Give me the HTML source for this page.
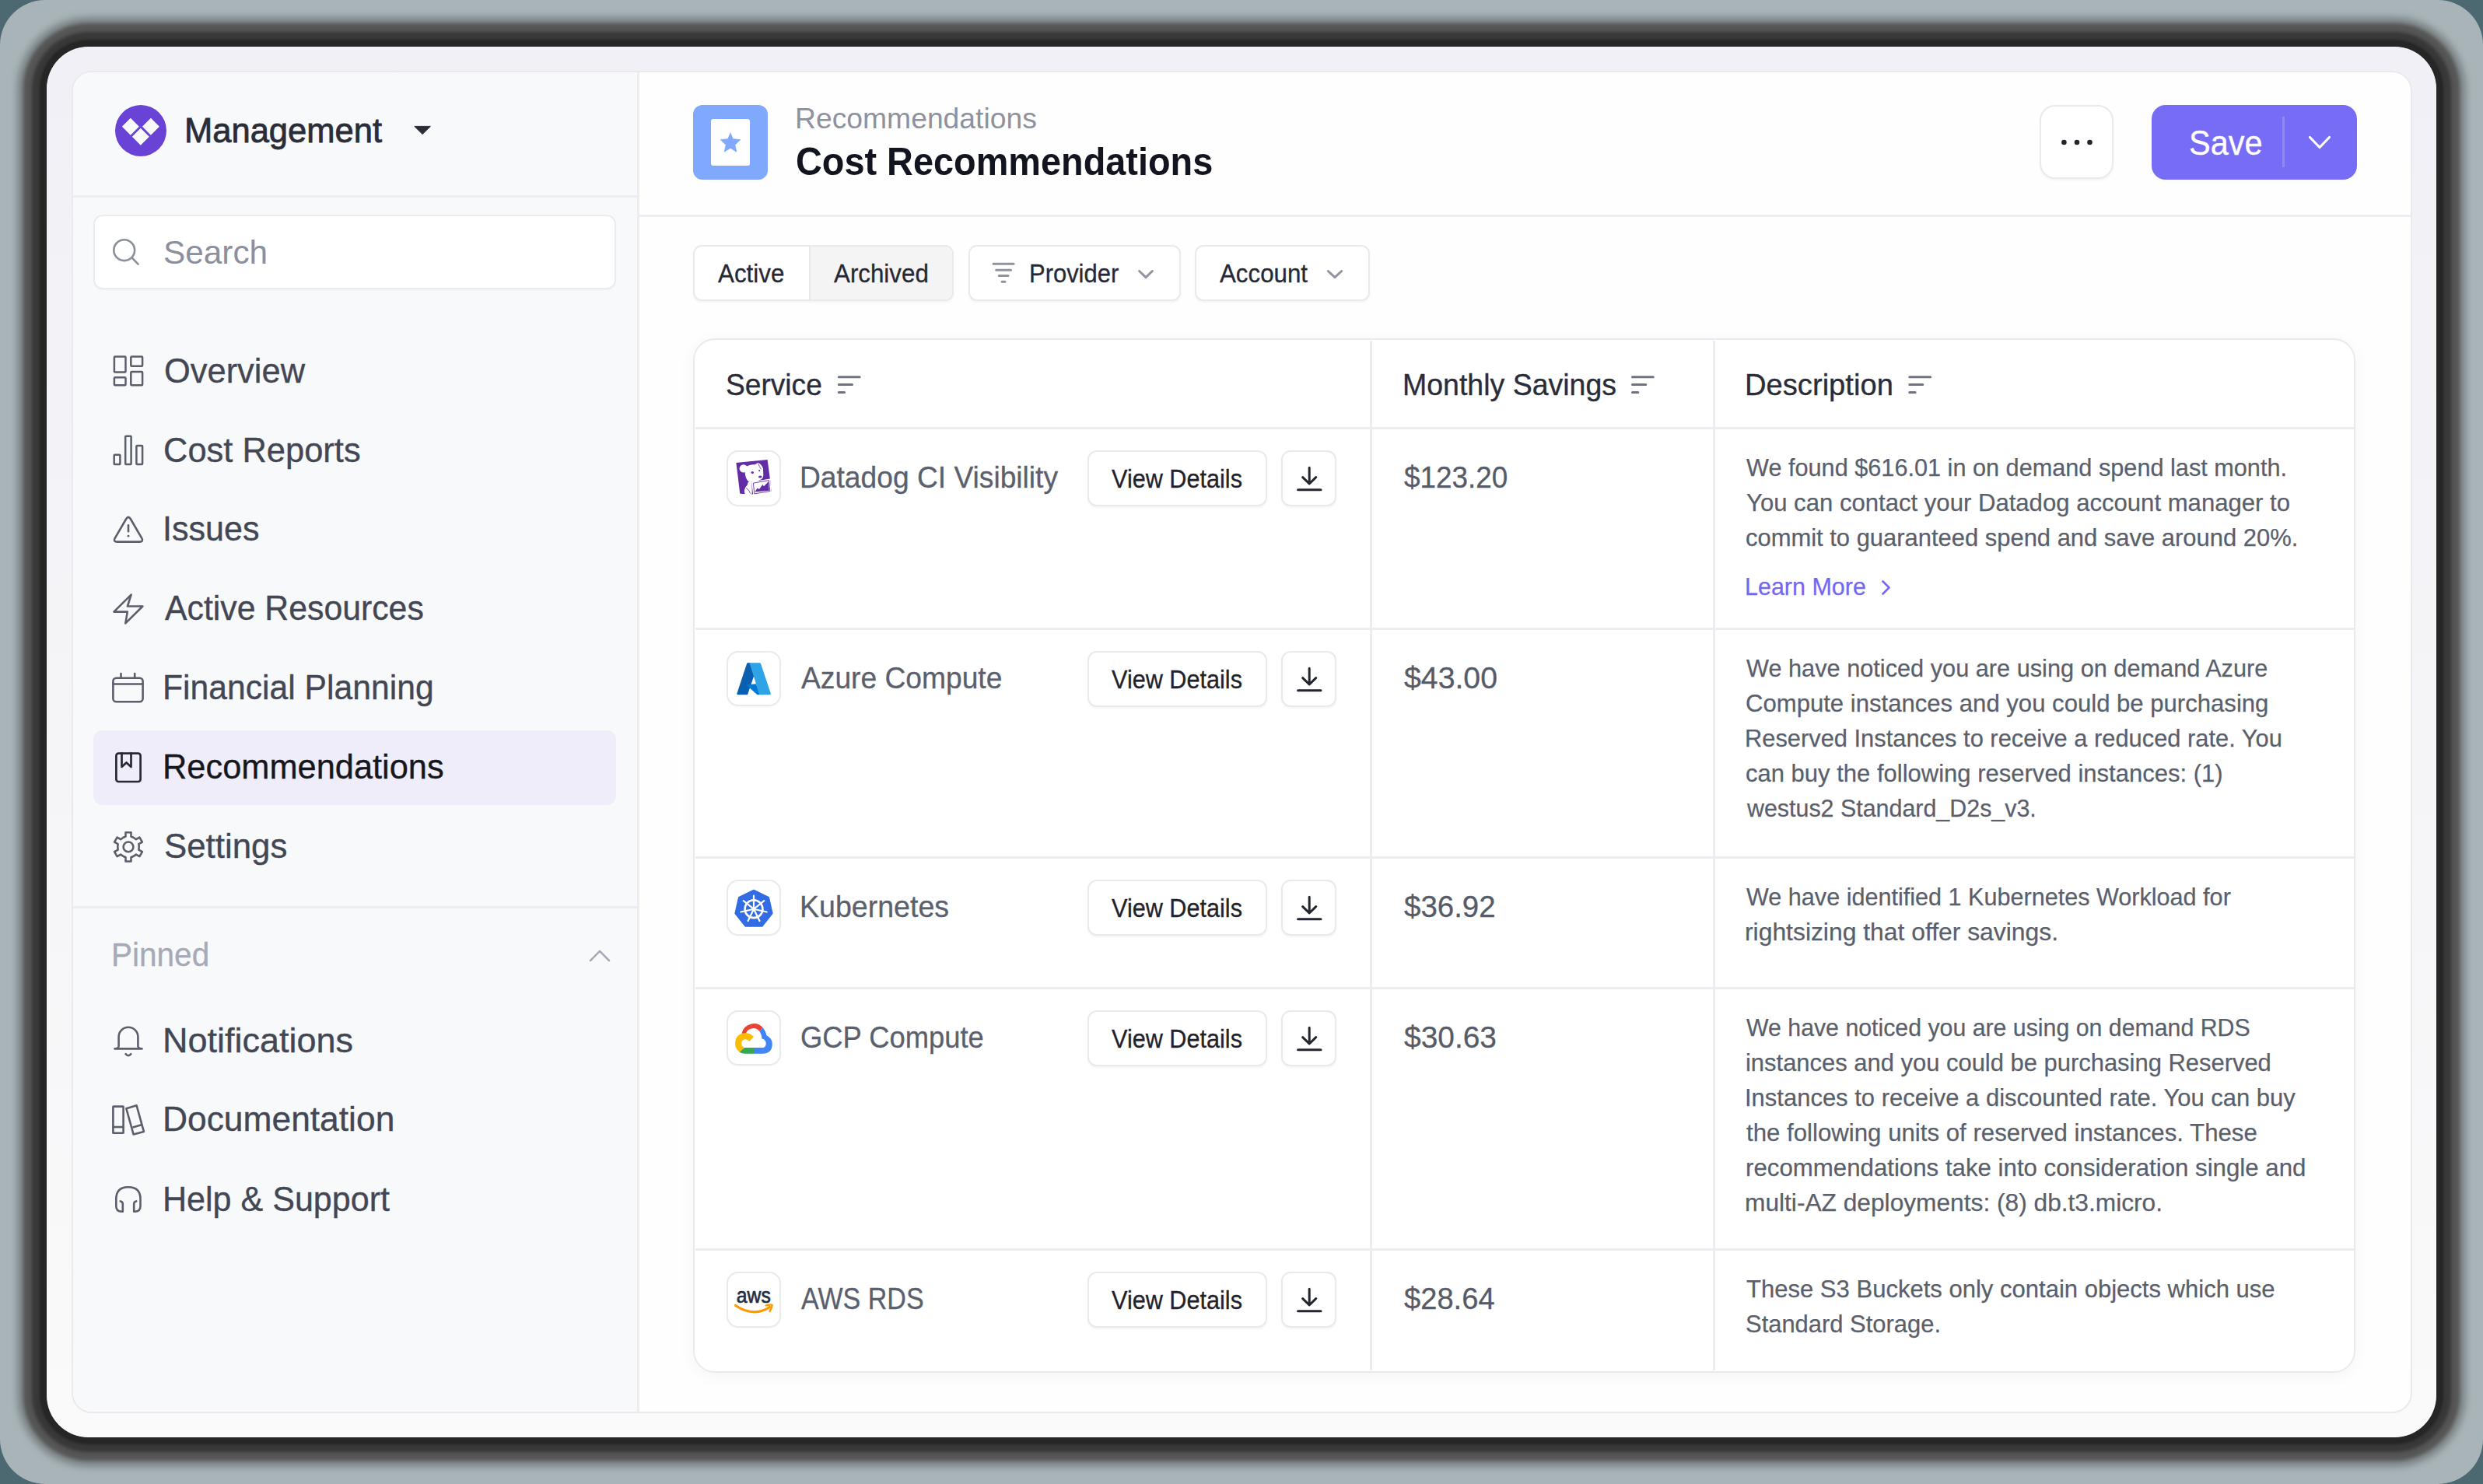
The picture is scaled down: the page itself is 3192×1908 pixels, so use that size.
<!DOCTYPE html>
<html><head><meta charset="utf-8">
<style>
html,body{margin:0;padding:0}
body{width:3192px;height:1908px;position:relative;overflow:hidden;background:#4c6870;font-family:"Liberation Sans",sans-serif}
.a{position:absolute;box-sizing:border-box}
.t{position:absolute;white-space:nowrap;line-height:1;transform-origin:0 0;font-family:"Liberation Sans",sans-serif}
svg{position:absolute;overflow:visible}
.btn{position:absolute;box-sizing:border-box;background:#fff;border:2px solid #e9eaed;box-shadow:0 2px 3px rgba(20,20,40,0.045)}
</style></head><body>
<!-- background noise average -->
<div class="a" style="left:0;top:0;width:3192px;height:1908px;border-radius:58px;background:#a8b4b8"></div>
<!-- window with shadow -->
<div class="a" style="left:60px;top:60px;width:3072px;height:1788px;border-radius:54px;background:linear-gradient(180deg,#f1f0f6 0%,#f5f5f8 50%,#fafafa 100%);box-shadow:0 0 3px 9px #262626,0 0 4px 19px #383838,0 0 4px 30px #565656,0 0 8px 38px rgba(110,116,118,0.75)"></div>
<!-- panel -->
<div class="a" style="left:91.5px;top:90.8px;width:3009px;height:1726.5px;border-radius:26px;border:2.7px solid #eaeaee;background:#fefefe;overflow:hidden">
  <div class="a" style="left:0;top:0;width:728px;height:1726px;background:#f8f9fb;border-right:3px solid #ecedf0"></div>
  <div class="a" style="left:0;top:158.3px;width:726px;height:3px;background:#ecedf0"></div>
  <div class="a" style="left:0;top:1072.6px;width:726px;height:3px;background:#ecedf0"></div>
  <div class="a" style="left:728px;top:183.3px;width:2280px;height:3px;background:#ecedf0"></div>
</div>

<!-- sidebar: logo -->
<svg style="left:148px;top:135px" width="66" height="66" viewBox="0 0 66 66">
  <circle cx="33" cy="33" r="33" fill="#6843d6"/>
  <path d="M19.8,16.8 L30.8,27.8 L19.8,38.8 L8.8,27.8 Z M45.9,16.8 L56.9,27.8 L45.9,38.8 L34.9,27.8 Z M32.8,29.8 L43.8,40.8 L32.8,51.8 L21.8,40.8 Z" fill="#f8f9fb"/>
</svg>
<svg style="left:0;top:0" width="1" height="1"><path d="M532.8,162.4 L553.4,162.4 L543.1,172.6 Z" fill="#2a2d37" stroke="#2a2d37" stroke-width="1" stroke-linejoin="round"/></svg>

<!-- search -->
<div class="a" style="left:120.4px;top:275.8px;width:671.2px;height:96px;border-radius:12px;background:#fff;border:2.7px solid #ebecef;box-shadow:0 1px 2px rgba(0,0,0,0.03)"></div>
<svg style="left:0;top:0" width="1" height="1"><circle cx="159.7" cy="321.7" r="13.4" fill="none" stroke="#8b909d" stroke-width="2.6"/><path d="M170.2,332 L177.6,339.6" stroke="#8b909d" stroke-width="2.6" stroke-linecap="round"/></svg>

<!-- highlight -->
<div class="a" style="left:119.7px;top:938.9px;width:672.4px;height:95.7px;border-radius:12px;background:#efedf9"></div>

<!-- nav icons -->
<svg style="left:136px;top:445px" width="60" height="60" viewBox="0 0 60 60" fill="none" stroke="#5b5f6c" stroke-width="2.5" stroke-linejoin="round">
  <rect x="10.9" y="13.5" width="14.6" height="19.9" rx="1"/><rect x="32.3" y="13.5" width="14.8" height="12.2" rx="1"/>
  <rect x="10.9" y="40.2" width="14.6" height="10.0" rx="1"/><rect x="32.3" y="33.1" width="14.8" height="17.1" rx="1"/>
</svg>
<svg style="left:136px;top:548px" width="60" height="60" viewBox="0 0 60 60" fill="none" stroke="#5b5f6c" stroke-width="2.5" stroke-linejoin="round">
  <rect x="10.7" y="36.8" width="7.7" height="12.3" rx="0.8"/><rect x="25.2" y="12.7" width="7.4" height="36.4" rx="0.8"/><rect x="39.4" y="24.9" width="7.7" height="24.2" rx="0.8"/>
</svg>
<svg style="left:136px;top:650px" width="60" height="60" viewBox="0 0 60 60" fill="none" stroke="#5b5f6c" stroke-width="2.6" stroke-linecap="round" stroke-linejoin="round">
  <path d="M26.3,17 Q29,12.8 31.7,17 L46.5,42.3 Q48.5,46.6 43.5,46.6 L14.5,46.6 Q9.5,46.6 11.5,42.3 Z"/>
  <path d="M29,25.2 V33.2"/><circle cx="29" cy="39.2" r="1.4" fill="#5b5f6c" stroke="none"/>
</svg>
<svg style="left:136px;top:752px" width="60" height="60" viewBox="0 0 60 60" fill="none" stroke="#5b5f6c" stroke-width="2.6" stroke-linejoin="round" stroke-linecap="round">
  <path d="M32.6,12.6 L10.4,34.6 L27.8,34.6 L25.3,49.4 L47.4,27.5 L27.9,27.5 Z"/>
</svg>
<svg style="left:136px;top:854px" width="60" height="60" viewBox="0 0 60 60" fill="none" stroke="#5b5f6c" stroke-width="2.6" stroke-linecap="round">
  <rect x="9.4" y="17.7" width="38.2" height="30.5" rx="4"/><path d="M9.4,25.5 H47.6 M19.5,12 V17.7 M37.2,12 V17.7"/>
</svg>
<svg style="left:136px;top:956px" width="60" height="60" viewBox="0 0 60 60" fill="none" stroke="#262932" stroke-width="2.7" stroke-linejoin="round" stroke-linecap="round">
  <rect x="13.4" y="12.6" width="31.2" height="36.4" rx="3"/><path d="M20.5,12.6 V30 L26.5,24.4 L32.5,30 V12.6"/>
</svg>
<svg style="left:136px;top:1058px" width="60" height="60" viewBox="0 0 60 60" fill="none" stroke="#5b5f6c" stroke-width="2.6" stroke-linejoin="round">
  <path d="M25.5,17.5 L25.5,12.3 L32.5,12.3 L32.5,17.5 L35.9,19.0 L38.9,21.2 L43.4,18.6 L46.9,24.6 L42.4,27.2 L42.7,30.9 L42.4,34.6 L46.9,37.2 L43.4,43.2 L38.9,40.6 L35.9,42.8 L32.5,44.3 L32.5,49.5 L25.5,49.5 L25.5,44.3 L22.2,42.8 L19.1,40.6 L14.6,43.2 L11.1,37.2 L15.6,34.6 L15.3,30.9 L15.6,27.2 L11.1,24.6 L14.6,18.6 L19.1,21.2 L22.2,19.0 Z"/>
  <circle cx="29" cy="30.9" r="6.4"/>
</svg>
<!-- chevron up -->
<svg style="left:0;top:0" width="1" height="1"><path d="M759,1235 L771,1222.8 L783,1235" fill="none" stroke="#a6aab6" stroke-width="2.5" stroke-linecap="round" stroke-linejoin="round"/></svg>
<svg style="left:136px;top:1308px" width="60" height="60" viewBox="0 0 60 60" fill="none" stroke="#5b5f6c" stroke-width="2.6" stroke-linecap="round" stroke-linejoin="round">
  <path d="M16.6,37 V25 A12.4,12.3 0 0 1 41.4,25 V37 Q41.6,39.8 46.5,40.4 M11.5,40.4 Q16.4,39.8 16.6,37 M11.5,40.4 H46.5"/>
  <path d="M25.6,47.2 Q29,51.2 32.3,47.2"/>
</svg>
<svg style="left:136px;top:1410px" width="60" height="60" viewBox="0 0 60 60" fill="none" stroke="#5b5f6c" stroke-width="2.6" stroke-linejoin="round">
  <rect x="9.4" y="12.6" width="13.2" height="34.2" rx="0.6"/><path d="M9.4,39 H22.6"/>
  <path d="M26.3,15.2 L39.6,11.3 L48.9,44.9 L35.6,48.5 Z M34.6,39.4 L46.6,36"/>
</svg>
<svg style="left:136px;top:1512px" width="60" height="60" viewBox="0 0 60 60" fill="none" stroke="#5b5f6c" stroke-width="2.6" stroke-linecap="round" stroke-linejoin="round">
  <path d="M18.8,32.4 Q21.8,33 21.8,35.8 V45.7 H20.3 Q13.3,45.7 13.3,38.8 V29.5 Q13.3,14.2 28.9,14.2 Q44.5,14.2 44.5,29.5 V38.8 Q44.5,45.7 37.5,45.7 H36.2 V35.8 Q36.2,33 39.2,32.4"/>
</svg>

<!-- header icon -->
<div class="a" style="left:891px;top:135px;width:96px;height:96px;border-radius:12px;background:#80a9fd"></div>
<div class="a" style="left:914px;top:153px;width:50px;height:60px;border-radius:3px;background:#fff"></div>
<svg style="left:0;top:0" width="1" height="1"><path d="M939,170.7 L942.3,178.6 L952,179.6 L944.9,186.3 L946.9,195.3 L939,190.5 L931.1,195.3 L933.1,186.3 L926,179.6 L935.7,178.6 Z" fill="#80a9fd" stroke="#80a9fd" stroke-width="0.6" stroke-linejoin="round"/></svg>

<!-- more button -->
<div class="btn" style="left:2622.3px;top:135.1px;width:95px;height:95.4px;border-radius:20px;border-width:2.7px"></div>
<svg style="left:0;top:0" width="1" height="1" fill="#22252e"><circle cx="2653.4" cy="183" r="3.3"/><circle cx="2670" cy="183" r="3.3"/><circle cx="2686.5" cy="183" r="3.3"/></svg>
<!-- save button -->
<div class="a" style="left:2766px;top:135px;width:264px;height:95.5px;border-radius:18px;background:#766cf5"></div>
<div class="a" style="left:2934px;top:150px;width:3px;height:65px;background:#8f88f7"></div>
<svg style="left:0;top:0" width="1" height="1"><path d="M2969.5,176.5 L2982,189.5 L2994.5,176.5" fill="none" stroke="#fff" stroke-width="3.2" stroke-linecap="round" stroke-linejoin="round"/></svg>

<!-- filters -->
<div class="btn" style="left:890.9px;top:315px;width:335.5px;height:71.6px;border-radius:11px;border-width:2.7px;overflow:hidden"><div class="a" style="left:147px;top:0;width:190px;height:72px;background:#f4f4f5;border-left:2.7px solid #e7e8eb"></div></div>
<div class="btn" style="left:1245.2px;top:315px;width:272.5px;height:71.6px;border-radius:11px;border-width:2.7px"></div>
<div class="btn" style="left:1536.1px;top:315px;width:224.8px;height:71.6px;border-radius:11px;border-width:2.7px"></div>
<svg style="left:0;top:0" width="1" height="1" fill="none" stroke="#9094a0" stroke-width="3" stroke-linecap="round" stroke-linejoin="round">
  <path d="M1277,339.3 H1303.1 M1280.6,347.3 H1299.6 M1284.2,354.6 H1296 M1288.1,362.2 H1292.1"/>
  <path d="M1464.6,348.5 L1473,356.6 L1481.4,348.5"/>
  <path d="M1707.3,348.5 L1716,356.6 L1724.7,348.5"/>
</svg>

<!-- table card -->
<div class="a" style="left:891.3px;top:435.2px;width:2137.2px;height:1329.4px;border-radius:28px;border:2.7px solid #e9eaed;background:#fff;box-shadow:0 4px 22px rgba(30,30,60,0.045)"></div>
<div class="a" style="left:1761px;top:438px;width:3px;height:1324px;background:#ecedf0"></div>
<div class="a" style="left:2202px;top:438px;width:3px;height:1324px;background:#ecedf0"></div>
<div class="a" style="left:894px;top:549px;width:2132px;height:3px;background:#ecedf0"></div>
<div class="a" style="left:894px;top:807px;width:2132px;height:3px;background:#ecedf0"></div>
<div class="a" style="left:894px;top:1101px;width:2132px;height:3px;background:#ecedf0"></div>
<div class="a" style="left:894px;top:1269px;width:2132px;height:3px;background:#ecedf0"></div>
<div class="a" style="left:894px;top:1605px;width:2132px;height:3px;background:#ecedf0"></div>
<!-- sort icons -->
<svg style="left:0;top:0" width="1" height="1" fill="none" stroke="#6e7281" stroke-width="3" stroke-linecap="round">
  <path d="M1078.3,484.7 H1105.1 M1078.3,494.6 H1095.5 M1078.3,504.5 H1085.6"/>
  <path d="M2098.5,484.7 H2125.3 M2098.5,494.6 H2115.7 M2098.5,504.5 H2105.8"/>
  <path d="M2454.8,484.7 H2481.6 M2454.8,494.6 H2471.8 M2454.8,504.5 H2462.1"/>
</svg>
<div class="btn" style="left:933.7px;top:579.0px;width:70.5px;height:71.5px;border-radius:15px;border-width:2.7px;box-shadow:0 1px 2px rgba(20,20,40,0.04)"></div>
<svg style="left:930px;top:576.0px" width="80" height="80" viewBox="0 0 80 80"><path d="M16.4,19.1 L56.6,15.1 L59.9,40 L61.7,56.6 L38,59.5 L21.3,58.8 Z" fill="#632ca6"/>
<circle cx="25.8" cy="26.4" r="5.2" fill="#fff"/>
<path d="M27.5,25 Q33,20.8 40.5,21.2 L44.6,18.8 Q49.5,21.5 51,26.5 L51.3,35.5 Q50.8,40.2 46.5,41.2 Q41.5,44.2 36.5,43.8 L33,43 Q30.5,44.5 30.8,47.5 Q26,52 27,57.5 Q29.5,62.2 33.5,61.5 Q36.6,60.2 36.8,57 L36.4,44 L31.5,42.5 Q28,38 27.8,32.5 Z" fill="#fff"/>
<path d="M44.6,19.5 Q46,24 48.6,27.5" fill="none" stroke="#632ca6" stroke-width="0.8"/>
<path d="M29,51.5 Q33.5,53.5 34.5,58.5" fill="none" stroke="#632ca6" stroke-width="0.8"/>
<path d="M36.2,43.6 L59.9,39.4 L61.8,57 L38.2,60.6 Z" fill="#fff"/>
<path d="M38.4,45.1 L58.4,41.6 L59.9,55.6 L39.8,58.8 Z" fill="none" stroke="#632ca6" stroke-width="0.9"/>
<path d="M40.4,56.6 L43.6,51.4 L46,53 L50.4,47 L52,49.2 L57.8,43.3 L58.9,54.8 Z" fill="#632ca6"/>
<ellipse cx="37.3" cy="31.4" rx="1.7" ry="1.5" fill="#632ca6"/><ellipse cx="46.2" cy="29.1" rx="1" ry="1.2" fill="#632ca6"/><ellipse cx="47.3" cy="37" rx="2.3" ry="1.5" fill="#632ca6"/></svg>
<div class="btn" style="left:1398.2px;top:578.7px;width:230.6px;height:72px;border-radius:12px;border-width:2.7px"></div>
<div class="btn" style="left:1647px;top:578.7px;width:71px;height:72px;border-radius:12px;border-width:2.7px"></div>
<svg style="left:1648px;top:580.0px" width="70" height="70" viewBox="0 0 70 70" fill="none" stroke="#22252e" stroke-width="3" stroke-linecap="round" stroke-linejoin="round"><path d="M35.2,21.3 V41.8 M26.7,33.6 L35.2,42 L43.7,33.6 M20.6,49.8 H50"/></svg>
<div class="btn" style="left:933.7px;top:836.9px;width:70.5px;height:71.5px;border-radius:15px;border-width:2.7px;box-shadow:0 1px 2px rgba(20,20,40,0.04)"></div>
<svg style="left:930px;top:833.9px" width="80" height="80" viewBox="0 0 80 80"><path d="M31,18.3 L34.8,18.3 L39.2,35 L31,59.3 L18.5,59.3 Q16.8,59.3 17.4,57.6 L30,19.5 Q30.3,18.3 31,18.3 Z" fill="#0a5fb0"/>
<path d="M29.1,46.4 L42,45.3 L46.8,59.3 L43.5,59.3 L34.5,51.2 Z" fill="#0078d4"/>
<path d="M33.4,18.3 L46.5,18.3 Q47.7,18.3 48.1,19.5 L60.8,57.6 Q61.2,59.3 59.6,59.3 L46.4,59.3 Z" fill="#2ea3e6"/></svg>
<div class="btn" style="left:1398.2px;top:836.6px;width:230.6px;height:72px;border-radius:12px;border-width:2.7px"></div>
<div class="btn" style="left:1647px;top:836.6px;width:71px;height:72px;border-radius:12px;border-width:2.7px"></div>
<svg style="left:1648px;top:837.9px" width="70" height="70" viewBox="0 0 70 70" fill="none" stroke="#22252e" stroke-width="3" stroke-linecap="round" stroke-linejoin="round"><path d="M35.2,21.3 V41.8 M26.7,33.6 L35.2,42 L43.7,33.6 M20.6,49.8 H50"/></svg>
<div class="btn" style="left:933.7px;top:1131.2px;width:70.5px;height:71.5px;border-radius:15px;border-width:2.7px;box-shadow:0 1px 2px rgba(20,20,40,0.04)"></div>
<svg style="left:930px;top:1128.2px" width="80" height="80" viewBox="0 0 80 80"><path d="M39.0,16.7 L58.0,25.8 L62.6,46.3 L49.5,62.8 L28.5,62.8 L15.4,46.3 L20.0,25.8 Z" fill="#326ce5" stroke="#326ce5" stroke-width="2" stroke-linejoin="round"/>
<circle cx="39" cy="40.7" r="11.4" fill="none" stroke="#fff" stroke-width="2.6"/>
<path d="M39.0,38.5 L39.0,23.7 M40.7,39.3 L52.3,30.1 M41.1,41.2 L55.6,44.5 M40.0,42.7 L46.4,56.0 M38.0,42.7 L31.6,56.0 M36.9,41.2 L22.4,44.5 M37.3,39.3 L25.7,30.1" stroke="#fff" stroke-width="2.2" stroke-linecap="round"/>
<circle cx="39" cy="40.7" r="2.6" fill="#fff"/></svg>
<div class="btn" style="left:1398.2px;top:1130.9px;width:230.6px;height:72px;border-radius:12px;border-width:2.7px"></div>
<div class="btn" style="left:1647px;top:1130.9px;width:71px;height:72px;border-radius:12px;border-width:2.7px"></div>
<svg style="left:1648px;top:1132.2px" width="70" height="70" viewBox="0 0 70 70" fill="none" stroke="#22252e" stroke-width="3" stroke-linecap="round" stroke-linejoin="round"><path d="M35.2,21.3 V41.8 M26.7,33.6 L35.2,42 L43.7,33.6 M20.6,49.8 H50"/></svg>
<div class="btn" style="left:933.7px;top:1298.8px;width:70.5px;height:71.5px;border-radius:15px;border-width:2.7px;box-shadow:0 1px 2px rgba(20,20,40,0.04)"></div>
<svg style="left:930px;top:1295.8px" width="80" height="80" viewBox="0 0 80 80"><path d="M23.5,32.5 A16,16 0 0 1 50.8,25.2 L46.3,30 A10,10 0 0 0 28.5,34.5 Z" fill="#ea4335"/>
<path d="M50.8,25.2 Q55,31 55.2,35 Q63,39 62.8,46.5 Q62.5,58.8 50,58.8 L39,58.8 L39,51 L50,51 Q54.5,51 54.7,46 Q54.8,40.5 49.5,39.5 Q48.8,33 46.3,30 Z" fill="#4285f4"/>
<path d="M39,51 L26.8,51 L20.5,56.5 Q23,58.8 28,58.8 L39,58.8 Z" fill="#34a853"/>
<path d="M28.5,32.2 Q35,32 39,37 L33.4,42.9 Q31.5,40.2 28.3,40.2 Q23.3,40.4 23.2,45.5 Q23.4,49.3 26.8,51 L20.5,56.5 Q15.1,52.5 15.1,45.5 Q15.3,32.6 28.5,32.2 Z" fill="#fbbc04"/></svg>
<div class="btn" style="left:1398.2px;top:1298.5px;width:230.6px;height:72px;border-radius:12px;border-width:2.7px"></div>
<div class="btn" style="left:1647px;top:1298.5px;width:71px;height:72px;border-radius:12px;border-width:2.7px"></div>
<svg style="left:1648px;top:1299.8px" width="70" height="70" viewBox="0 0 70 70" fill="none" stroke="#22252e" stroke-width="3" stroke-linecap="round" stroke-linejoin="round"><path d="M35.2,21.3 V41.8 M26.7,33.6 L35.2,42 L43.7,33.6 M20.6,49.8 H50"/></svg>
<div class="btn" style="left:933.7px;top:1635.0px;width:70.5px;height:71.5px;border-radius:15px;border-width:2.7px;box-shadow:0 1px 2px rgba(20,20,40,0.04)"></div>
<svg style="left:930px;top:1632.0px" width="80" height="80" viewBox="0 0 80 80"><text x="38.8" y="42.6" text-anchor="middle" font-family="Liberation Sans" font-size="27" font-weight="400" fill="#252f3e" stroke="#252f3e" stroke-width="0.7" textLength="44" lengthAdjust="spacingAndGlyphs">aws</text>
<path d="M15.5,46.5 Q39,62 59.5,48.5" fill="none" stroke="#f90" stroke-width="3.2" stroke-linecap="round"/>
<path d="M54.8,46.4 Q60,45 62.6,45.8 Q62.4,49.5 59.6,54" fill="none" stroke="#f90" stroke-width="2.4" stroke-linecap="round" stroke-linejoin="round"/></svg>
<div class="btn" style="left:1398.2px;top:1634.7px;width:230.6px;height:72px;border-radius:12px;border-width:2.7px"></div>
<div class="btn" style="left:1647px;top:1634.7px;width:71px;height:72px;border-radius:12px;border-width:2.7px"></div>
<svg style="left:1648px;top:1636.0px" width="70" height="70" viewBox="0 0 70 70" fill="none" stroke="#22252e" stroke-width="3" stroke-linecap="round" stroke-linejoin="round"><path d="M35.2,21.3 V41.8 M26.7,33.6 L35.2,42 L43.7,33.6 M20.6,49.8 H50"/></svg>

<!-- Learn more chevron -->
<svg style="left:0;top:0" width="1" height="1"><path d="M2420.5,747.5 L2428.5,755.5 L2420.5,763.5" fill="none" stroke="#7467f0" stroke-width="2.6" stroke-linecap="round" stroke-linejoin="round"/></svg>

<div class='t' style='left:237.00px;top:146.0px;font-size:44.19px;font-weight:400;color:#2a2d37;transform:scaleX(0.9849);-webkit-text-stroke:0.8px #2a2d37;'>Management</div>
<div class='t' style='left:210.00px;top:302.8px;font-size:42.73px;font-weight:400;color:#8b909c;transform:scaleX(0.9909);'>Search</div>
<div class='t' style='left:211.00px;top:455.7px;font-size:43.46px;font-weight:400;color:#434653;transform:scaleX(0.9995);-webkit-text-stroke:0.35px #434653;'>Overview</div>
<div class='t' style='left:210.00px;top:558.2px;font-size:43.46px;font-weight:400;color:#434653;transform:scaleX(1.0002);-webkit-text-stroke:0.35px #434653;'>Cost Reports</div>
<div class='t' style='left:209.00px;top:659.2px;font-size:43.46px;font-weight:400;color:#434653;transform:scaleX(0.9914);-webkit-text-stroke:0.35px #434653;'>Issues</div>
<div class='t' style='left:212.00px;top:761.2px;font-size:43.46px;font-weight:400;color:#434653;transform:scaleX(0.9843);-webkit-text-stroke:0.35px #434653;'>Active Resources</div>
<div class='t' style='left:209.00px;top:863.2px;font-size:43.46px;font-weight:400;color:#434653;transform:scaleX(0.9819);-webkit-text-stroke:0.35px #434653;'>Financial Planning</div>
<div class='t' style='left:209.00px;top:965.2px;font-size:43.46px;font-weight:400;color:#16171d;transform:scaleX(0.9982);-webkit-text-stroke:0.35px #16171d;'>Recommendations</div>
<div class='t' style='left:211.00px;top:1067.2px;font-size:43.46px;font-weight:400;color:#434653;transform:scaleX(1.0089);-webkit-text-stroke:0.35px #434653;'>Settings</div>
<div class='t' style='left:142.60px;top:1206.1px;font-size:42.88px;font-weight:400;color:#a6aab6;transform:scaleX(0.9453);-webkit-text-stroke:0.3px #a6aab6;'>Pinned</div>
<div class='t' style='left:209.00px;top:1317.2px;font-size:43.46px;font-weight:400;color:#434653;transform:scaleX(1.0354);-webkit-text-stroke:0.35px #434653;'>Notifications</div>
<div class='t' style='left:209.00px;top:1418.2px;font-size:43.46px;font-weight:400;color:#434653;transform:scaleX(1.0206);-webkit-text-stroke:0.35px #434653;'>Documentation</div>
<div class='t' style='left:209.00px;top:1520.7px;font-size:43.46px;font-weight:400;color:#434653;transform:scaleX(0.9909);-webkit-text-stroke:0.35px #434653;'>Help &amp; Support</div>
<div class='t' style='left:1022.00px;top:134.0px;font-size:37.79px;font-weight:400;color:#8e929e;transform:scaleX(0.9868);'>Recommendations</div>
<div class='t' style='left:1023.00px;top:183.4px;font-size:50.29px;font-weight:700;color:#121520;transform:scaleX(0.9317);'>Cost Recommendations</div>
<div class='t' style='left:2814.20px;top:161.6px;font-size:43.90px;font-weight:400;color:#ffffff;transform:scaleX(0.9444);-webkit-text-stroke:0.4px #fff;'>Save</div>
<div class='t' style='left:922.60px;top:336.1px;font-size:32.70px;font-weight:400;color:#262933;transform:scaleX(0.9595);-webkit-text-stroke:0.3px #262933;'>Active</div>
<div class='t' style='left:1072.00px;top:336.1px;font-size:32.70px;font-weight:400;color:#262933;transform:scaleX(0.9578);-webkit-text-stroke:0.3px #262933;'>Archived</div>
<div class='t' style='left:1322.80px;top:336.1px;font-size:32.70px;font-weight:400;color:#262933;transform:scaleX(0.9466);-webkit-text-stroke:0.3px #262933;'>Provider</div>
<div class='t' style='left:1567.60px;top:336.1px;font-size:32.70px;font-weight:400;color:#262933;transform:scaleX(0.9567);-webkit-text-stroke:0.3px #262933;'>Account</div>
<div class='t' style='left:933.00px;top:474.8px;font-size:39.24px;font-weight:400;color:#2a2d38;transform:scaleX(0.9465);-webkit-text-stroke:0.35px #2a2d38;'>Service</div>
<div class='t' style='left:1802.60px;top:474.8px;font-size:39.24px;font-weight:400;color:#2a2d38;transform:scaleX(0.9554);-webkit-text-stroke:0.35px #2a2d38;'>Monthly Savings</div>
<div class='t' style='left:2243.20px;top:474.8px;font-size:39.24px;font-weight:400;color:#2a2d38;transform:scaleX(0.9726);-webkit-text-stroke:0.35px #2a2d38;'>Description</div>
<div class='t' style='left:1028.00px;top:594.2px;font-size:39.24px;font-weight:400;color:#5b606d;transform:scaleX(0.9476);-webkit-text-stroke:0.3px #5b606d;'>Datadog CI Visibility</div>
<div class='t' style='left:1429.00px;top:599.7px;font-size:32.70px;font-weight:400;color:#1f222b;transform:scaleX(0.9372);-webkit-text-stroke:0.3px #1f222b;'>View Details</div>
<div class='t' style='left:1804.60px;top:594.2px;font-size:39.24px;font-weight:400;color:#565b68;transform:scaleX(0.9406);-webkit-text-stroke:0.3px #565b68;'>$123.20</div>
<div class='t' style='left:2245.00px;top:585.9px;font-size:31.25px;font-weight:400;color:#5a5f6c;transform:scaleX(0.9813);-webkit-text-stroke:0.25px #5a5f6c;'>We found $616.01 in on demand spend last month.</div>
<div class='t' style='left:2245.00px;top:630.9px;font-size:31.25px;font-weight:400;color:#5a5f6c;transform:scaleX(0.9951);-webkit-text-stroke:0.25px #5a5f6c;'>You can contact your Datadog account manager to</div>
<div class='t' style='left:2244.00px;top:675.9px;font-size:31.25px;font-weight:400;color:#5a5f6c;transform:scaleX(0.9899);-webkit-text-stroke:0.25px #5a5f6c;'>commit to guaranteed spend and save around 20%.</div>
<div class='t' style='left:1030.00px;top:852.1px;font-size:39.24px;font-weight:400;color:#5b606d;transform:scaleX(0.9479);-webkit-text-stroke:0.3px #5b606d;'>Azure Compute</div>
<div class='t' style='left:1429.00px;top:857.6px;font-size:32.70px;font-weight:400;color:#1f222b;transform:scaleX(0.9372);-webkit-text-stroke:0.3px #1f222b;'>View Details</div>
<div class='t' style='left:1804.60px;top:852.1px;font-size:39.24px;font-weight:400;color:#565b68;transform:scaleX(0.9999);-webkit-text-stroke:0.3px #565b68;'>$43.00</div>
<div class='t' style='left:2245.00px;top:843.8px;font-size:31.25px;font-weight:400;color:#5a5f6c;transform:scaleX(0.9827);-webkit-text-stroke:0.25px #5a5f6c;'>We have noticed you are using on demand Azure</div>
<div class='t' style='left:2244.00px;top:888.8px;font-size:31.25px;font-weight:400;color:#5a5f6c;transform:scaleX(0.9950);-webkit-text-stroke:0.25px #5a5f6c;'>Compute instances and you could be purchasing</div>
<div class='t' style='left:2243.00px;top:933.8px;font-size:31.25px;font-weight:400;color:#5a5f6c;transform:scaleX(0.9867);-webkit-text-stroke:0.25px #5a5f6c;'>Reserved Instances to receive a reduced rate. You</div>
<div class='t' style='left:2244.00px;top:978.8px;font-size:31.25px;font-weight:400;color:#5a5f6c;transform:scaleX(0.9923);-webkit-text-stroke:0.25px #5a5f6c;'>can buy the following reserved instances: (1)</div>
<div class='t' style='left:2246.00px;top:1023.8px;font-size:31.25px;font-weight:400;color:#5a5f6c;transform:scaleX(0.9729);-webkit-text-stroke:0.25px #5a5f6c;'>westus2 Standard_D2s_v3.</div>
<div class='t' style='left:1028.00px;top:1146.4px;font-size:39.24px;font-weight:400;color:#5b606d;transform:scaleX(0.9570);-webkit-text-stroke:0.3px #5b606d;'>Kubernetes</div>
<div class='t' style='left:1429.00px;top:1151.9px;font-size:32.70px;font-weight:400;color:#1f222b;transform:scaleX(0.9372);-webkit-text-stroke:0.3px #1f222b;'>View Details</div>
<div class='t' style='left:1804.60px;top:1146.4px;font-size:39.24px;font-weight:400;color:#565b68;transform:scaleX(0.9800);-webkit-text-stroke:0.3px #565b68;'>$36.92</div>
<div class='t' style='left:2245.00px;top:1138.1px;font-size:31.25px;font-weight:400;color:#5a5f6c;transform:scaleX(0.9787);-webkit-text-stroke:0.25px #5a5f6c;'>We have identified 1 Kubernetes Workload for</div>
<div class='t' style='left:2243.00px;top:1183.1px;font-size:31.25px;font-weight:400;color:#5a5f6c;transform:scaleX(1.0191);-webkit-text-stroke:0.25px #5a5f6c;'>rightsizing that offer savings.</div>
<div class='t' style='left:1029.00px;top:1314.0px;font-size:39.24px;font-weight:400;color:#5b606d;transform:scaleX(0.9269);-webkit-text-stroke:0.3px #5b606d;'>GCP Compute</div>
<div class='t' style='left:1429.00px;top:1319.5px;font-size:32.70px;font-weight:400;color:#1f222b;transform:scaleX(0.9372);-webkit-text-stroke:0.3px #1f222b;'>View Details</div>
<div class='t' style='left:1804.60px;top:1314.0px;font-size:39.24px;font-weight:400;color:#565b68;transform:scaleX(0.9916);-webkit-text-stroke:0.3px #565b68;'>$30.63</div>
<div class='t' style='left:2245.00px;top:1305.7px;font-size:31.25px;font-weight:400;color:#5a5f6c;transform:scaleX(0.9691);-webkit-text-stroke:0.25px #5a5f6c;'>We have noticed you are using on demand RDS</div>
<div class='t' style='left:2244.00px;top:1350.7px;font-size:31.25px;font-weight:400;color:#5a5f6c;transform:scaleX(0.9899);-webkit-text-stroke:0.25px #5a5f6c;'>instances and you could be purchasing Reserved</div>
<div class='t' style='left:2243.00px;top:1395.7px;font-size:31.25px;font-weight:400;color:#5a5f6c;transform:scaleX(0.9913);-webkit-text-stroke:0.25px #5a5f6c;'>Instances to receive a discounted rate. You can buy</div>
<div class='t' style='left:2245.00px;top:1440.7px;font-size:31.25px;font-weight:400;color:#5a5f6c;transform:scaleX(0.9985);-webkit-text-stroke:0.25px #5a5f6c;'>the following units of reserved instances. These</div>
<div class='t' style='left:2244.00px;top:1485.7px;font-size:31.25px;font-weight:400;color:#5a5f6c;transform:scaleX(0.9993);-webkit-text-stroke:0.25px #5a5f6c;'>recommendations take into consideration single and</div>
<div class='t' style='left:2243.00px;top:1530.7px;font-size:31.25px;font-weight:400;color:#5a5f6c;transform:scaleX(1.0139);-webkit-text-stroke:0.25px #5a5f6c;'>multi-AZ deployments: (8) db.t3.micro.</div>
<div class='t' style='left:1030.00px;top:1650.2px;font-size:39.24px;font-weight:400;color:#5b606d;transform:scaleX(0.8676);-webkit-text-stroke:0.3px #5b606d;'>AWS RDS</div>
<div class='t' style='left:1429.00px;top:1655.7px;font-size:32.70px;font-weight:400;color:#1f222b;transform:scaleX(0.9372);-webkit-text-stroke:0.3px #1f222b;'>View Details</div>
<div class='t' style='left:1804.60px;top:1650.2px;font-size:39.24px;font-weight:400;color:#565b68;transform:scaleX(0.9716);-webkit-text-stroke:0.3px #565b68;'>$28.64</div>
<div class='t' style='left:2245.00px;top:1641.9px;font-size:31.25px;font-weight:400;color:#5a5f6c;transform:scaleX(0.9930);-webkit-text-stroke:0.25px #5a5f6c;'>These S3 Buckets only contain objects which use</div>
<div class='t' style='left:2244.00px;top:1686.9px;font-size:31.25px;font-weight:400;color:#5a5f6c;transform:scaleX(0.9897);-webkit-text-stroke:0.25px #5a5f6c;'>Standard Storage.</div>
<div class='t' style='left:2243.20px;top:738.5px;font-size:31.25px;font-weight:400;color:#7467f0;transform:scaleX(0.9753);-webkit-text-stroke:0.25px #7467f0;'>Learn More</div>
</body></html>
